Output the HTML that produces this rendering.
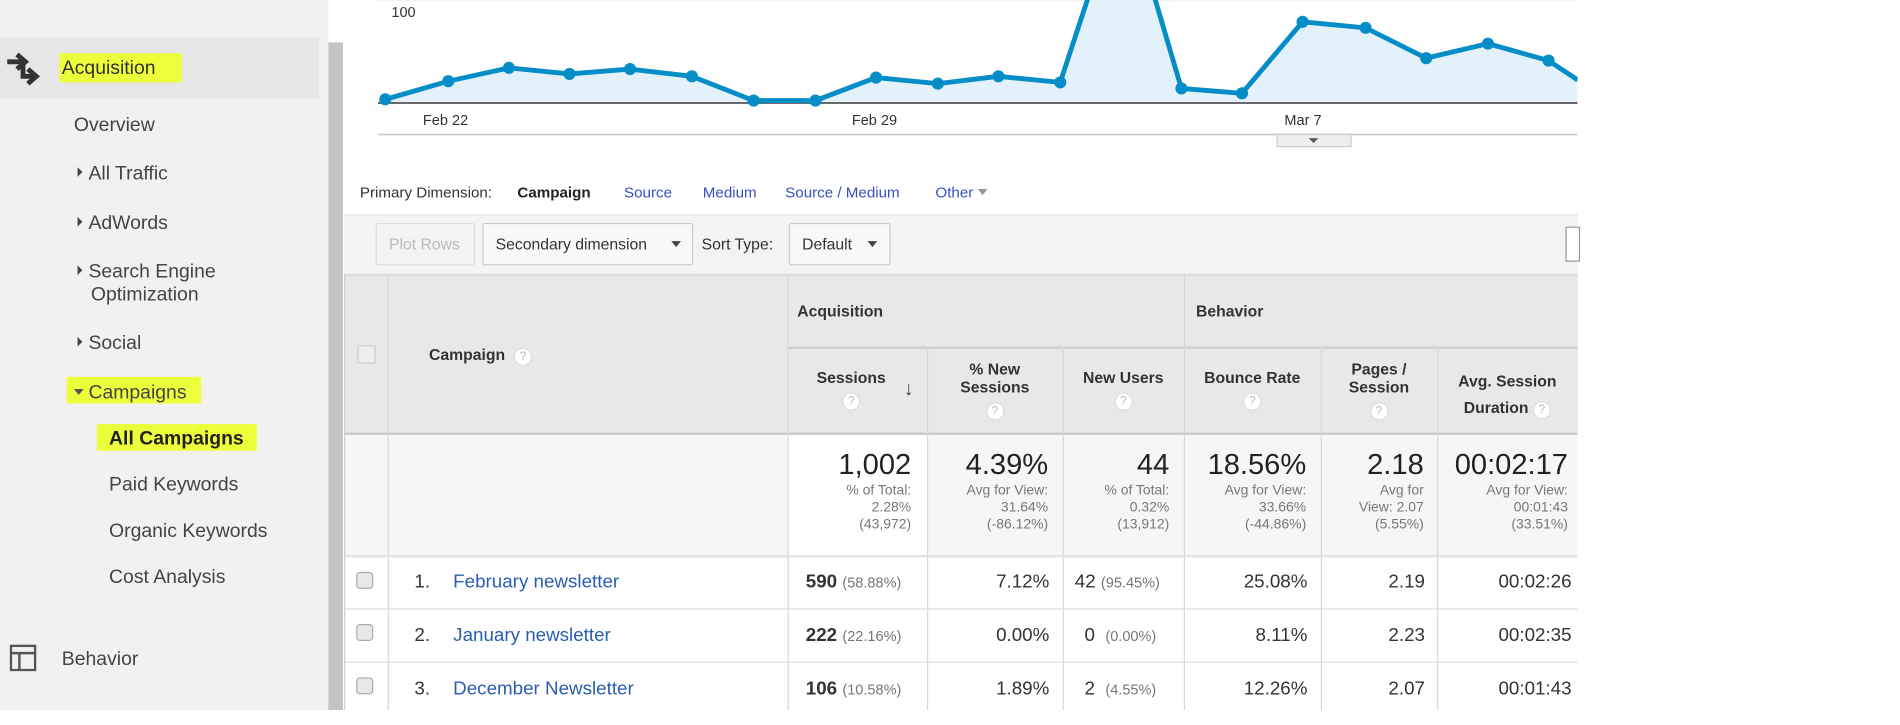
<!DOCTYPE html>
<html><head><meta charset="utf-8"><style>
*{margin:0;padding:0;box-sizing:border-box}
html,body{width:1900px;height:725px;overflow:hidden;background:#fff}
#w{position:absolute;left:0;top:0;width:1568px;height:598px;transform:scale(1.2117);transform-origin:0 0;font-family:"Liberation Sans",Arial,sans-serif;color:#333}
.a{position:absolute;white-space:nowrap}
.sb{font-size:16px;color:#444}
.hl{position:absolute;background:#ecff3a}
.tri{display:inline-block;width:0;height:0;border-top:4px solid transparent;border-bottom:4px solid transparent;border-left:4px solid #444;margin-right:5px;vertical-align:2px}
.trd{display:inline-block;width:0;height:0;border-left:4px solid transparent;border-right:4px solid transparent;border-top:5px solid #555;margin-right:4px;vertical-align:3px}
.lk{color:#3a4fc0}
.btn{position:absolute;height:35px;border:1px solid #ccc;border-radius:2px;background:#f8f8f8;font-size:13px;line-height:33px;padding-left:10px;color:#333}
.th{font-weight:bold;font-size:13px;color:#333}
.q{display:inline-block;width:15px;height:15px;border-radius:50%;background:#fff;border:1px solid #ddd;color:#bbb;font-size:10px;line-height:13px;text-align:center;font-weight:normal}
.vl{position:absolute;width:1px;background:#d8d8d8}
.hlx{position:absolute;height:1px;background:#ddd}
.big{font-size:24px;color:#222}
.sm{font-size:11.5px;color:#777;line-height:14px}
.r{text-align:right}
.cb{position:absolute;width:14px;height:14px;border:1px solid #aaa;border-radius:3px;background:#e8e8e8}
.d{font-size:15.5px;color:#333}
.p{font-size:12px;color:#777}
</style></head><body><div id="w">
<div class="a" style="left:0;top:0;width:271px;height:586px;background:#f1f1f1"></div>
<div class="a" style="left:0;top:31px;width:263px;height:50px;background:#e6e6e6"></div>
<div class="a" style="left:271px;top:35px;width:12px;height:551px;background:#c4c4c4"></div>
<svg class="a" style="left:4px;top:40px" width="30" height="32" viewBox="0 0 30 32"><path d="M2 11h13M10 5l7 6-7 6" stroke="#333" stroke-width="4" fill="none"/><path d="M15 13v10h9M19 17l7 6-7 6" stroke="#333" stroke-width="4" fill="none"/></svg>
<div class="hl" style="left:49px;top:44px;width:101px;height:24px"></div>
<div class="a sb" style="left:51px;top:48px;color:#333">Acquisition</div>
<div class="a sb" style="left:61px;top:95px">Overview</div>
<div class="a sb" style="left:64px;top:135px"><span class="tri"></span>All Traffic</div>
<div class="a sb" style="left:64px;top:176px"><span class="tri"></span>AdWords</div>
<div class="a sb" style="left:64px;top:216px"><span class="tri"></span>Search Engine</div>
<div class="a sb" style="left:75px;top:235px">Optimization</div>
<div class="a sb" style="left:64px;top:275px"><span class="tri"></span>Social</div>
<div class="hl" style="left:55px;top:311px;width:111px;height:22px"></div>
<div class="a sb" style="left:61px;top:316px"><span class="trd"></span>Campaigns</div>
<div class="hl" style="left:80px;top:350px;width:132px;height:22px"></div>
<div class="a sb" style="left:90px;top:354px;font-weight:bold;color:#222">All Campaigns</div>
<div class="a sb" style="left:90px;top:392px">Paid Keywords</div>
<div class="a sb" style="left:90px;top:430px">Organic Keywords</div>
<div class="a sb" style="left:90px;top:468px">Cost Analysis</div>
<svg class="a" style="left:8px;top:532px" width="22" height="22"><rect x="1" y="1" width="20" height="20" fill="none" stroke="#555" stroke-width="2"/><path d="M1 7h20M8 7v14" stroke="#555" stroke-width="2"/></svg>
<div class="a sb" style="left:51px;top:536px">Behavior</div>
<div class="a" style="left:323px;top:3px;font-size:12px;color:#333">100</div>
<svg class="a" style="left:284px;top:0" width="1018" height="125">
<line x1="28" y1="0" x2="1018" y2="0" stroke="#eee"/>
<polygon fill="#e2f1fa" points="34,82 86,67 136,56 186,61 236,57 287,63 338,83 389,83 439,64 490,69 540,63 591,68 615,-5 668,-5 691,73 741,77 791,18 843,23 893,48 944,36 994,50 1018,66 1018,85 34,85"/>
<line x1="28" y1="85" x2="1018" y2="85" stroke="#555" stroke-width="1.5"/>
<polyline fill="none" stroke="#058dc7" stroke-width="4" stroke-linejoin="round" points="34,82 86,67 136,56 186,61 236,57 287,63 338,83 389,83 439,64 490,69 540,63 591,68 615,-5 668,-5 691,73 741,77 791,18 843,23 893,48 944,36 994,50 1018,66"/>
<g fill="#058dc7"><circle cx="34" cy="82" r="5"/><circle cx="86" cy="67" r="5"/><circle cx="136" cy="56" r="5"/><circle cx="186" cy="61" r="5"/><circle cx="236" cy="57" r="5"/><circle cx="287" cy="63" r="5"/><circle cx="338" cy="83" r="5"/><circle cx="389" cy="83" r="5"/><circle cx="439" cy="64" r="5"/><circle cx="490" cy="69" r="5"/><circle cx="540" cy="63" r="5"/><circle cx="591" cy="68" r="5"/><circle cx="691" cy="73" r="5"/><circle cx="741" cy="77" r="5"/><circle cx="791" cy="18" r="5"/><circle cx="843" cy="23" r="5"/><circle cx="893" cy="48" r="5"/><circle cx="944" cy="36" r="5"/><circle cx="994" cy="50" r="5"/></g>
<line x1="28" y1="111" x2="1018" y2="111" stroke="#ccc" stroke-width="1.5"/>
<rect x="770" y="111" width="61" height="10" fill="#eee" stroke="#ccc"/>
<path d="M796 114h8l-4 4z" fill="#555"/>
</svg>
<div class="a" style="left:349px;top:92px;font-size:12px">Feb 22</div>
<div class="a" style="left:703px;top:92px;font-size:12px">Feb 29</div>
<div class="a" style="left:1060px;top:92px;font-size:12px">Mar 7</div>
<div class="a" style="left:297px;top:152px;font-size:12.5px;color:#333">Primary Dimension:</div>
<div class="a" style="left:427px;top:152px;font-size:12.5px;font-weight:bold;color:#222">Campaign</div>
<div class="a lk" style="left:515px;top:152px;font-size:12.5px">Source</div>
<div class="a lk" style="left:580px;top:152px;font-size:12.5px">Medium</div>
<div class="a lk" style="left:648px;top:152px;font-size:12.5px">Source / Medium</div>
<div class="a lk" style="left:772px;top:152px;font-size:12.5px">Other <span style="display:inline-block;border-left:4px solid transparent;border-right:4px solid transparent;border-top:5px solid #999;vertical-align:2px"></span></div>
<div class="a" style="left:284px;top:177px;width:1018px;height:49px;background:#f3f3f3;border-top:1px solid #e4e4e4"></div>
<div class="btn" style="left:310px;top:184px;width:82px;color:#bbb;background:#f3f3f3;border-color:#ddd">Plot Rows</div>
<div class="btn" style="left:398px;top:184px;width:174px">Secondary dimension <span style="position:absolute;right:9px;top:14px;border-left:4px solid transparent;border-right:4px solid transparent;border-top:5px solid #444"></span></div>
<div class="a" style="left:579px;top:194px;font-size:13px">Sort Type:</div>
<div class="btn" style="left:651px;top:184px;width:84px">Default <span style="position:absolute;right:10px;top:14px;border-left:4px solid transparent;border-right:4px solid transparent;border-top:5px solid #444"></span></div>
<div class="a" style="left:1292px;top:187px;width:12px;height:29px;border:1px solid #999;background:#fff"></div>
<div class="a" style="left:284px;top:226px;width:1018px;height:133px;background:#e8e8e8;border-top:2px solid #ddd;border-bottom:2px solid #ccc"></div>
<div class="a" style="left:284px;top:359px;width:1018px;height:100px;background:#f6f6f6"></div>
<div class="a" style="left:650px;top:359px;width:115px;height:100px;background:#fff"></div>
<div class="hlx" style="left:650px;top:286px;width:652px;background:#d0d0d0;height:1.5px"></div>
<div class="hlx" style="left:284px;top:458px;width:1018px;background:#e4e4e4;height:2px"></div>
<div class="hlx" style="left:284px;top:502px;width:1018px"></div>
<div class="hlx" style="left:284px;top:546px;width:1018px"></div>
<div class="vl" style="left:284px;top:226px;height:360px;background:#ccc"></div>
<div class="vl" style="left:320px;top:226px;height:360px"></div>
<div class="vl" style="left:650px;top:226px;height:360px"></div>
<div class="vl" style="left:765px;top:286px;height:300px"></div>
<div class="vl" style="left:877px;top:286px;height:300px"></div>
<div class="vl" style="left:977px;top:226px;height:360px"></div>
<div class="vl" style="left:1090px;top:286px;height:300px"></div>
<div class="vl" style="left:1186px;top:286px;height:300px"></div>
<div class="a" style="left:295px;top:285px;width:15px;height:15px;border:1px solid #ccc;background:#eee"></div>
<div class="a th" style="left:354px;top:285px">Campaign &nbsp;<span class="q">?</span></div>
<div class="a th" style="left:658px;top:249px">Acquisition</div>
<div class="a th" style="left:987px;top:249px">Behavior</div>
<div class="a th" style="left:650px;top:304px;width:105px;text-align:center">Sessions<br><span class="q" style="margin-top:5px">?</span></div>
<div class="a" style="left:746px;top:313px;font-size:16px;color:#444">↓</div>
<div class="a th" style="left:765px;top:297px;width:112px;text-align:center;line-height:15px">% New<br>Sessions<br><span class="q" style="margin-top:5px">?</span></div>
<div class="a th" style="left:877px;top:304px;width:100px;text-align:center">New Users<br><span class="q" style="margin-top:5px">?</span></div>
<div class="a th" style="left:977px;top:304px;width:113px;text-align:center">Bounce Rate<br><span class="q" style="margin-top:5px">?</span></div>
<div class="a th" style="left:1090px;top:297px;width:96px;text-align:center;line-height:15px">Pages /<br>Session<br><span class="q" style="margin-top:5px">?</span></div>
<div class="a th" style="left:1186px;top:304px;width:116px;text-align:center;line-height:22px">Avg. Session<br>Duration <span class="q">?</span></div>
<div class="a r" style="left:650px;top:370px;width:102px"><div class="big">1,002</div><div class="sm">% of Total:<br>2.28%<br>(43,972)</div></div>
<div class="a r" style="left:765px;top:370px;width:100px"><div class="big">4.39%</div><div class="sm">Avg for View:<br>31.64%<br>(-86.12%)</div></div>
<div class="a r" style="left:877px;top:370px;width:88px"><div class="big">44</div><div class="sm">% of Total:<br>0.32%<br>(13,912)</div></div>
<div class="a r" style="left:977px;top:370px;width:101px"><div class="big">18.56%</div><div class="sm">Avg for View:<br>33.66%<br>(-44.86%)</div></div>
<div class="a r" style="left:1090px;top:370px;width:85px"><div class="big">2.18</div><div class="sm">Avg for<br>View: 2.07<br>(5.55%)</div></div>
<div class="a r" style="left:1186px;top:370px;width:108px"><div class="big">00:02:17</div><div class="sm">Avg for View:<br>00:01:43<br>(33.51%)</div></div>
<div class="cb" style="left:294px;top:472px"></div>
<div class="cb" style="left:294px;top:515px"></div>
<div class="cb" style="left:294px;top:559px"></div>
<div class="a d" style="left:342px;top:472px">1.</div>
<div class="a d lk" style="left:374px;top:472px;color:#2a5db0">February newsletter</div>
<div class="a d" style="left:342px;top:516px">2.</div>
<div class="a d lk" style="left:374px;top:516px;color:#2a5db0">January newsletter</div>
<div class="a d" style="left:342px;top:560px">3.</div>
<div class="a d lk" style="left:374px;top:560px;color:#2a5db0">December Newsletter</div>
<div class="a d" style="left:665px;top:472px"><b>590</b> <span class="p">(58.88%)</span></div>
<div class="a d" style="left:665px;top:516px"><b>222</b> <span class="p">(22.16%)</span></div>
<div class="a d" style="left:665px;top:560px"><b>106</b> <span class="p">(10.58%)</span></div>
<div class="a d r" style="left:765px;top:472px;width:101px">7.12%</div>
<div class="a d r" style="left:765px;top:516px;width:101px">0.00%</div>
<div class="a d r" style="left:765px;top:560px;width:101px">1.89%</div>
<div class="a d" style="left:887px;top:472px">42 <span class="p">(95.45%)</span></div>
<div class="a d" style="left:895px;top:516px">0 &nbsp;<span class="p">(0.00%)</span></div>
<div class="a d" style="left:895px;top:560px">2 &nbsp;<span class="p">(4.55%)</span></div>
<div class="a d r" style="left:977px;top:472px;width:102px">25.08%</div>
<div class="a d r" style="left:977px;top:516px;width:102px">8.11%</div>
<div class="a d r" style="left:977px;top:560px;width:102px">12.26%</div>
<div class="a d r" style="left:1090px;top:472px;width:86px">2.19</div>
<div class="a d r" style="left:1090px;top:516px;width:86px">2.23</div>
<div class="a d r" style="left:1090px;top:560px;width:86px">2.07</div>
<div class="a d r" style="left:1186px;top:472px;width:111px">00:02:26</div>
<div class="a d r" style="left:1186px;top:516px;width:111px">00:02:35</div>
<div class="a d r" style="left:1186px;top:560px;width:111px">00:01:43</div>
<div class="a" style="left:0;top:586px;width:1568px;height:12px;background:#fff"></div>
</div></body></html>
